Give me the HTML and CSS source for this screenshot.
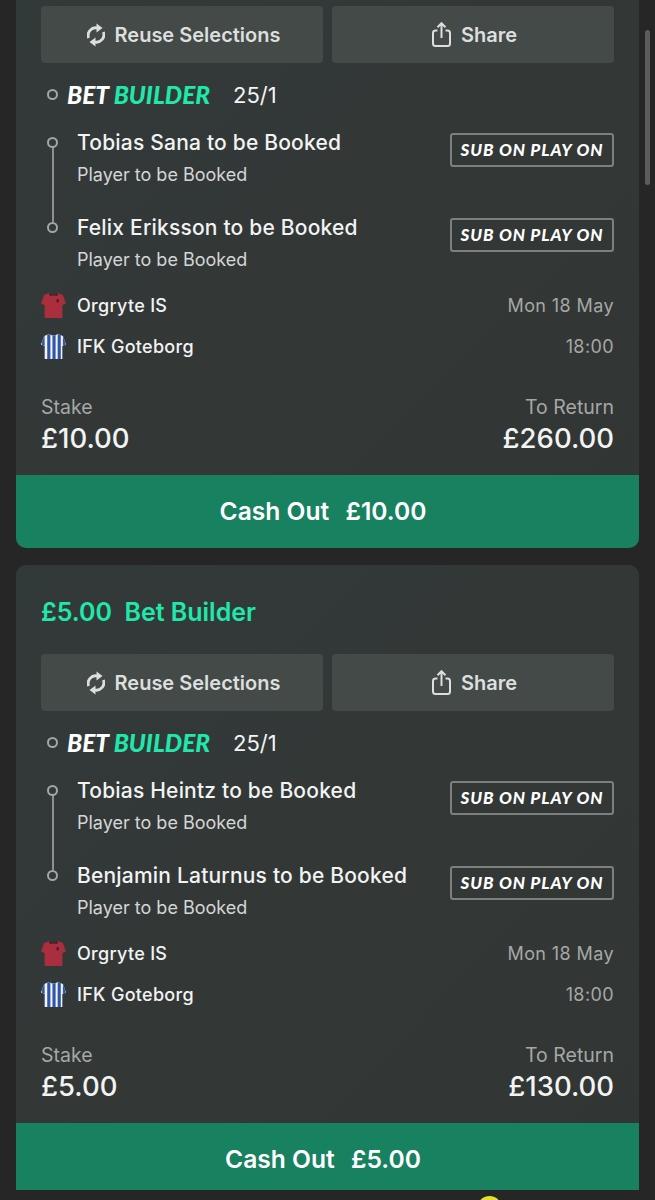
FILE: index.html
```html
<!DOCTYPE html>
<html lang="en">
<head>
    <meta charset="UTF-8">
    <meta name="viewport" content="width=device-width, initial-scale=1.0">
    <title>My Bets</title>
    <link rel="stylesheet" href="styles.css">
</head>
<body>
    <svg class="defs" width="0" height="0">
        <defs>
            <clipPath id="shirt-clip">
                <path d="M8 0 L3 2 L0 10 L3.5 11.5 V24 H20.5 V11.5 L24 10 L21 2 L16 0 Q12 3 8 0 Z"/>
            </clipPath>
        </defs>
    </svg>

    <main class="feed">
        <!-- First bet, scrolled partly off the top -->
        <section class="card card-cut-top">
            <div class="actions">
                <button class="action">
                    <svg class="icon icon-reuse" viewBox="0 0 18 24"><path d="M1.6 15 A7.6 7.6 0 0 1 10.5 5 M16.4 9 A7.6 7.6 0 0 1 7.5 19"/><path class="fill" d="M9.5 0.5 L15.5 5 L9.5 9.5 Z M8.5 23.5 L2.5 19 L8.5 14.5 Z"/></svg>
                    Reuse Selections
                </button>
                <button class="action">
                    <svg class="icon icon-share" viewBox="0 0 19 25"><path d="M5.5 8.5 H3.5 Q1 8.5 1 11 V21.5 Q1 24 3.5 24 H15.5 Q18 24 18 21.5 V11 Q18 8.5 15.5 8.5 H13.5 M9.5 16 V1.5 M5.5 5.2 L9.5 1.2 L13.5 5.2"/></svg>
                    Share
                </button>
            </div>
            <div class="builder">
                <span class="ring"></span>
                <span class="logo">BET <em>BUILDER</em></span>
                <span class="odds">25/1</span>
            </div>
            <ul class="legs">
                <li class="leg">
                    <div><h3>Tobias Sana to be Booked</h3><p>Player to be Booked</p></div>
                    <span class="sub">SUB ON PLAY ON</span>
                </li>
                <li class="leg">
                    <div><h3>Felix Eriksson to be Booked</h3><p>Player to be Booked</p></div>
                    <span class="sub">SUB ON PLAY ON</span>
                </li>
            </ul>
            <div class="teams">
                <div class="team">
                    <svg class="kit" viewBox="0 0 24 24"><g clip-path="url(#shirt-clip)"><rect width="24" height="24" fill="#a92f3f"/><rect x="8" width="8" height="2.5" fill="#3a1d22"/><rect x="15" y="6" width="2" height="3" fill="#3a1d22"/></g></svg>
                    <span class="team-name">Orgryte IS</span>
                    <span class="when">Mon 18 May</span>
                </div>
                <div class="team">
                    <svg class="kit" viewBox="0 0 24 24"><g clip-path="url(#shirt-clip)"><rect width="24" height="24" fill="#f2f4f8"/><rect x="1" width="2.5" height="24" fill="#2f55a8"/><rect x="6" width="3" height="24" fill="#2f55a8"/><rect x="11" width="3" height="24" fill="#2f55a8"/><rect x="16" width="3" height="24" fill="#2f55a8"/><rect x="21" width="2.5" height="24" fill="#2f55a8"/></g></svg>
                    <span class="team-name">IFK Goteborg</span>
                    <span class="when">18:00</span>
                </div>
            </div>
            <div class="money">
                <div><span class="label">Stake</span><strong>£10.00</strong></div>
                <div class="right"><span class="label">To Return</span><strong>£260.00</strong></div>
            </div>
            <button class="cashout cashout-tall">Cash Out <span>£10.00</span></button>
        </section>

        <!-- Second bet -->
        <section class="card card-cut-bottom">
            <h2 class="bet-title">£5.00 <span>Bet Builder</span></h2>
            <div class="actions">
                <button class="action">
                    <svg class="icon icon-reuse" viewBox="0 0 18 24"><path d="M1.6 15 A7.6 7.6 0 0 1 10.5 5 M16.4 9 A7.6 7.6 0 0 1 7.5 19"/><path class="fill" d="M9.5 0.5 L15.5 5 L9.5 9.5 Z M8.5 23.5 L2.5 19 L8.5 14.5 Z"/></svg>
                    Reuse Selections
                </button>
                <button class="action">
                    <svg class="icon icon-share" viewBox="0 0 19 25"><path d="M5.5 8.5 H3.5 Q1 8.5 1 11 V21.5 Q1 24 3.5 24 H15.5 Q18 24 18 21.5 V11 Q18 8.5 15.5 8.5 H13.5 M9.5 16 V1.5 M5.5 5.2 L9.5 1.2 L13.5 5.2"/></svg>
                    Share
                </button>
            </div>
            <div class="builder">
                <span class="ring"></span>
                <span class="logo">BET <em>BUILDER</em></span>
                <span class="odds">25/1</span>
            </div>
            <ul class="legs">
                <li class="leg">
                    <div><h3>Tobias Heintz to be Booked</h3><p>Player to be Booked</p></div>
                    <span class="sub">SUB ON PLAY ON</span>
                </li>
                <li class="leg">
                    <div><h3>Benjamin Laturnus to be Booked</h3><p>Player to be Booked</p></div>
                    <span class="sub">SUB ON PLAY ON</span>
                </li>
            </ul>
            <div class="teams">
                <div class="team">
                    <svg class="kit" viewBox="0 0 24 24"><g clip-path="url(#shirt-clip)"><rect width="24" height="24" fill="#a92f3f"/><rect x="8" width="8" height="2.5" fill="#3a1d22"/><rect x="15" y="6" width="2" height="3" fill="#3a1d22"/></g></svg>
                    <span class="team-name">Orgryte IS</span>
                    <span class="when">Mon 18 May</span>
                </div>
                <div class="team">
                    <svg class="kit" viewBox="0 0 24 24"><g clip-path="url(#shirt-clip)"><rect width="24" height="24" fill="#f2f4f8"/><rect x="1" width="2.5" height="24" fill="#2f55a8"/><rect x="6" width="3" height="24" fill="#2f55a8"/><rect x="11" width="3" height="24" fill="#2f55a8"/><rect x="16" width="3" height="24" fill="#2f55a8"/><rect x="21" width="2.5" height="24" fill="#2f55a8"/></g></svg>
                    <span class="team-name">IFK Goteborg</span>
                    <span class="when">18:00</span>
                </div>
            </div>
            <div class="money">
                <div><span class="label">Stake</span><strong>£5.00</strong></div>
                <div class="right"><span class="label">To Return</span><strong>£130.00</strong></div>
            </div>
            <button class="cashout">Cash Out <span>£5.00</span></button>
        </section>
    </main>

    <div class="scrollbar"></div>
    <div class="peek"></div>
</body>
</html>
```

FILE: styles.css
```css
/* Reset and Base Styling */
*, *::before, *::after {
    margin: 0;
    padding: 0;
    box-sizing: border-box;
}

html, body {
    height: 1200px;
    overflow: hidden;
}

body {
    font-family: Inter, "Noto Sans", sans-serif;
    background: #262626;
    color: #f2f3f3;
    position: relative;
}

.defs {
    display: block;
    height: 0;
}

.feed {
    display: flex;
    flex-direction: column;
    gap: 17px;
    padding: 0 16px;
}

.card {
    background: linear-gradient(135deg, #323a39, #333736 60%, #313534);
    border-radius: 10px;
    overflow: hidden;
    padding-top: 6px;
}

.card-cut-top {
    border-radius: 0 0 10px 10px;
}

.card-cut-bottom {
    border-radius: 10px 10px 0 0;
    padding-top: 0;
}

.bet-title {
    font-size: 25px;
    font-weight: 600;
    color: #20e8ab;
    height: 89px;
    padding: 32px 25px 0;
    line-height: 30px;
}

.bet-title span {
    margin-left: 6px;
}

/* Reuse / Share */
.actions {
    display: flex;
    gap: 9px;
    padding: 0 25px;
}

.action {
    flex: 1;
    height: 57px;
    display: flex;
    align-items: center;
    justify-content: center;
    gap: 10px;
    padding-left: 3px;
    border: none;
    border-radius: 4px;
    background: #434a48;
    color: #dcdfde;
    font-family: inherit;
    font-size: 20px;
    font-weight: 600;
}

.icon {
    fill: none;
    stroke: #dcdfde;
    stroke-width: 2;
}

.icon-reuse {
    width: 18px;
    height: 24px;
    stroke-width: 2.8;
}

.icon-share {
    width: 19px;
    height: 25px;
}

.icon .fill {
    fill: #dcdfde;
    stroke: none;
}

/* Bet builder heading */
.builder {
    display: flex;
    align-items: center;
    height: 32px;
    margin-top: 15px;
    padding-left: 31px;
}

.ring {
    width: 11px;
    height: 11px;
    border: 2px solid #a3a7a6;
    border-radius: 50%;
    margin-right: 9px;
}

.logo {
    font-family: Lato, sans-serif;
    font-size: 24.5px;
    font-weight: 900;
    font-style: italic;
    color: #fff;
    width: 166px;
}

.logo em {
    color: #20e8ab;
}

.odds {
    font-size: 22px;
    padding-top: 2px;
}

/* Selections */
.legs {
    list-style: none;
    margin-top: 16px;
    padding: 0 25px 0 61px;
}

.leg {
    position: relative;
    display: flex;
    justify-content: space-between;
    height: 85px;
    padding-top: 1px;
}

.leg::before {
    content: "";
    position: absolute;
    left: -30px;
    top: 11px;
    width: 11px;
    height: 11px;
    border: 2px solid #a3a7a6;
    border-radius: 50%;
}

.leg:first-child::after {
    content: "";
    position: absolute;
    left: -25px;
    top: 22px;
    width: 2px;
    height: 74px;
    background: #8c908f;
}

.leg h3 {
    font-size: 21px;
    font-weight: 500;
    letter-spacing: 0.2px;
    line-height: 32px;
}

.leg p {
    font-size: 18px;
    line-height: 24px;
    margin-top: 4px;
    color: #d4d6d5;
}

.sub {
    width: 164px;
    height: 34px;
    margin-top: 6px;
    border: 2px solid #7c817f;
    border-radius: 3px;
    font-family: Lato, sans-serif;
    font-size: 17px;
    font-weight: 900;
    font-style: italic;
    letter-spacing: 0.9px;
    line-height: 30px;
    text-align: center;
    color: #fff;
}

/* Teams */
.teams {
    margin-top: -11px;
    padding: 0 25px;
}

.team {
    display: flex;
    align-items: center;
    height: 41px;
}

.kit {
    width: 25px;
    height: 25px;
    margin-right: 11px;
}

.team-name {
    flex: 1;
    font-size: 18px;
    font-weight: 500;
    letter-spacing: 0.3px;
}

.when {
    font-size: 18px;
    letter-spacing: 0.4px;
    color: #a5a8a7;
}

/* Stake / return */
.money {
    display: flex;
    justify-content: space-between;
    padding: 28px 25px 0;
    height: 108px;
}

.right {
    text-align: right;
}

.label {
    display: block;
    font-size: 19.5px;
    line-height: 25px;
    color: #a5a8a7;
}

.money strong {
    display: block;
    font-size: 27.5px;
    font-weight: 500;
    line-height: 36px;
}

.cashout {
    display: block;
    width: 100%;
    height: 67px;
    border: none;
    padding: 5px 9px 0 0;
    background: #178160;
    color: #fff;
    font-family: inherit;
    font-size: 24.6px;
    font-weight: 600;
}

.cashout-tall {
    height: 73px;
    padding-top: 0;
    padding-bottom: 2px;
}

.cashout span {
    margin-left: 10px;
}

/* Overlays */
.scrollbar {
    position: absolute;
    left: 645px;
    top: 30px;
    width: 5px;
    height: 155px;
    border-radius: 3px;
    background: #5c5c5c;
}

.peek {
    position: absolute;
    left: 477px;
    top: 1196px;
    width: 25px;
    height: 25px;
    border-radius: 50%;
    background: #e0e22c;
}
```
